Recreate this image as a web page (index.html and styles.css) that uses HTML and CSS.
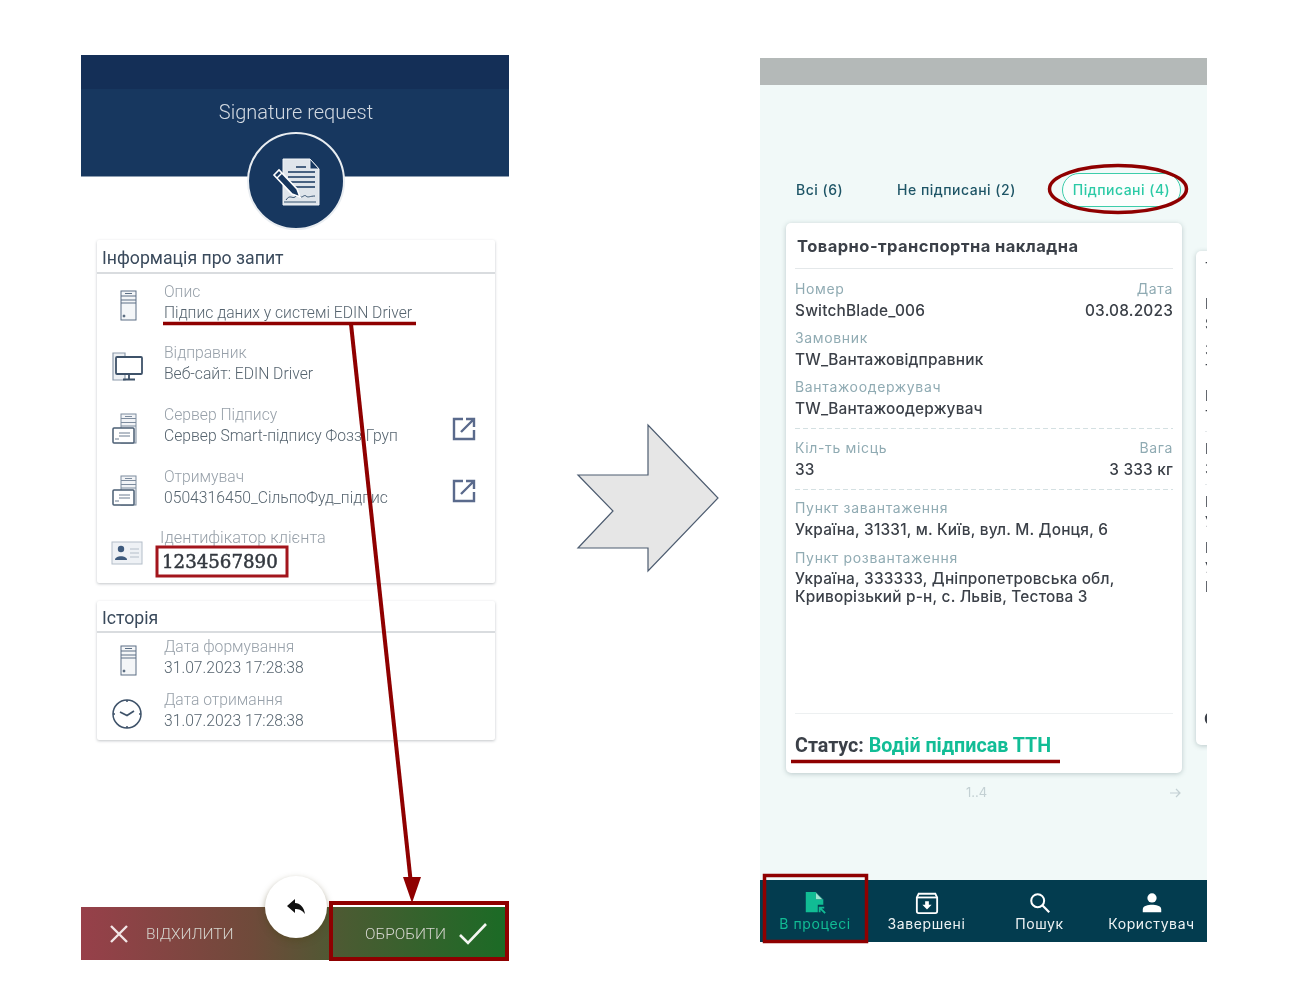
FILE: index.html
```html
<!DOCTYPE html>
<html lang="en">
<head>
    <meta charset="UTF-8">
    <title>Signature flow</title>
    <link rel="stylesheet" href="styles.css">
</head>
<body>
<div class="canvas">

    <!-- left phone -->
    <div class="phone-left">
        <div class="status-bar"></div>
        <div class="sig-header">Signature request</div>
        <div class="sig-badge">
            <svg width="60" height="60" viewBox="0 0 60 60">
                <path d="M19 8H46L55 18V54H19Z" fill="#dfe5eb" stroke="#f0f3f6" stroke-width="1"/>
                <path d="M46 8V18H55Z" fill="#17375f" stroke="#e8edf3"/>
                <path d="M24 21H51M24 26H51M24 31H51M24 36H51M32 16H42" stroke="#17375f" stroke-width="1.6"/>
                <path d="M22 49c4-6 6-1 9-3s3-4 5-1 4-2 6 0 4 0 9 0M20 51H52" stroke="#33506f" fill="none"/>
                <path d="M10 24L15 19L33 38L36 46L28 43Z" fill="#17375f" stroke="#fff" stroke-width="1.6"/>
                <path d="M13 27L18 22" stroke="#fff" stroke-width="1.4"/>
            </svg>
        </div>

        <section class="info-card first">
            <h2>Інформація про запит</h2>
            <div class="info-row">
                <svg class="row-icon" viewBox="0 0 32 32"><use href="#i-tower"/></svg>
                <div class="row-text"><span>Опис</span><p>Підпис даних у системі EDIN Driver</p></div>
            </div>
            <div class="info-row">
                <svg class="row-icon" viewBox="0 0 32 32"><use href="#i-desktop"/></svg>
                <div class="row-text"><span>Відправник</span><p>Веб-сайт: EDIN Driver</p></div>
            </div>
            <div class="info-row">
                <svg class="row-icon" viewBox="0 0 32 32"><use href="#i-server"/></svg>
                <div class="row-text"><span>Сервер Підпису</span><p>Сервер Smart-підпису Фозз Груп</p></div>
                <svg class="ext-icon" viewBox="0 0 24 24"><use href="#i-ext"/></svg>
            </div>
            <div class="info-row">
                <svg class="row-icon" viewBox="0 0 32 32"><use href="#i-server"/></svg>
                <div class="row-text"><span>Отримувач</span><p>0504316450_СільпоФуд_підпис</p></div>
                <svg class="ext-icon" viewBox="0 0 24 24"><use href="#i-ext"/></svg>
            </div>
            <div class="info-row client">
                <svg class="row-icon" viewBox="0 0 32 32"><use href="#i-card"/></svg>
                <div class="row-text"><span>Ідентифікатор клієнта</span><p class="client-id">1234567890</p></div>
            </div>
        </section>

        <section class="info-card second">
            <h2>Історія</h2>
            <div class="info-row short">
                <svg class="row-icon" viewBox="0 0 32 32"><use href="#i-tower"/></svg>
                <div class="row-text"><span>Дата формування</span><p>31.07.2023 17:28:38</p></div>
            </div>
            <div class="info-row short">
                <svg class="row-icon" viewBox="0 0 32 32"><use href="#i-clock"/></svg>
                <div class="row-text"><span>Дата отримання</span><p>31.07.2023 17:28:38</p></div>
            </div>
        </section>

        <div class="action-bar">
            <div class="action reject">
                <svg width="20" height="20" viewBox="0 0 20 20"><path d="M2 2L18 18M18 2L2 18" stroke="#f2e6e6" stroke-width="2.4"/></svg>
                <span>ВІДХИЛИТИ</span>
            </div>
            <div class="action process">
                <span>ОБРОБИТИ</span>
                <svg width="30" height="24" viewBox="0 0 30 24"><path d="M2 13L10 21L28 2" fill="none" stroke="#f4f6f2" stroke-width="2.6"/></svg>
            </div>
            <div class="back-btn">
                <svg width="20" height="18" viewBox="0 0 20 18"><path d="M1 8L9 1V5C14 5 18 9 19 16C16 12 13 11 9 11V15Z" fill="#111"/></svg>
            </div>
        </div>
    </div>

    <!-- arrow between phones -->
    <svg class="big-arrow" width="144" height="150" viewBox="0 0 144 150">
        <path d="M73 2V52H3L38 88L3 125H73V148L143 75Z" fill="#e6e6e6" stroke="#4d5c70" stroke-width="1.2"/>
    </svg>

    <!-- right phone -->
    <div class="phone-right">
        <div class="gray-bar"></div>
        <div class="tabs">
            <span class="tab tab-all">Всі (6)</span>
            <span class="tab tab-open">Не підписані (2)</span>
            <span class="tab tab-active">Підписані (4)</span>
        </div>
        <div class="cards">
            <article class="doc-card">
                <h3>Товарно-транспортна накладна</h3>
                <div class="doc-body">
                    <div class="pair"><div><label>Номер</label><b>SwitchBlade_006</b></div><div class="right"><label>Дата</label><b>03.08.2023</b></div></div>
                    <div class="field"><label>Замовник</label><b>TW_Вантажовідправник</b></div>
                    <div class="field"><label>Вантажоодержувач</label><b>TW_Вантажоодержувач</b></div>
                    <div class="pair dashed"><div><label>Кіл-ть місць</label><b>33</b></div><div class="right"><label>Вага</label><b>3 333 кг</b></div></div>
                    <div class="field dashed-top"><label>Пункт завантаження</label><b>Україна, 31331, м. Київ, вул. М. Донця, 6</b></div>
                    <div class="field last"><label>Пункт розвантаження</label><b class="tight">Україна, 333333, Дніпропетровська обл, Криворізький р-н, с. Львів, Тестова 3</b></div>
                </div>
                <div class="doc-status">Статус: <em>Водій підписав ТТН</em></div>
            </article>
            <article class="doc-card peek">
                <div class="peek-group top">Т</div>
                <div class="peek-group">Номер<br>SwitchBlade_006</div>
                <div class="peek-group">Замовник<br>TW_Вантажовідправник</div>
                <div class="peek-group">Вантажоодержувач<br>TW_Вантажоодержувач</div>
                <div class="peek-group ruled">Кіл-ть місць<br>33</div>
                <div class="peek-group ruled">Пункт завантаження<br>Україна</div>
                <div class="peek-group">Пункт розвантаження<br>Україна<br>Криворізький</div>
                <div class="peek-status">Статус</div>
            </article>
        </div>
        <div class="pager"><span>1..4</span>
            <svg width="12" height="12" viewBox="0 0 12 12"><path d="M1 6H11M7 2L11 6L7 10" fill="none" stroke="#c3d0d3" stroke-width="1.2"/></svg>
        </div>
        <nav class="tabbar">
            <div class="nav-item active">
                <svg width="26" height="26" viewBox="0 0 26 26"><path d="M3 1H14L22 9V15H16V23H3Z" fill="#11bc94"/><path d="M14 1V9H22Z" fill="#033c4f"/><path d="M14 2L21 9H14Z" fill="#9fe5d2"/><path d="M24 24L18 18M18 23V18H23" fill="none" stroke="#11bc94" stroke-width="2"/></svg>
                <span>В процесі</span>
            </div>
            <div class="nav-item">
                <svg width="26" height="26" viewBox="0 0 26 26"><path d="M4 3H22L24 7V22A2 2 0 0 1 22 24H4A2 2 0 0 1 2 22V7Z" fill="none" stroke="#fff" stroke-width="2"/><path d="M2 7H24" stroke="#fff" stroke-width="2"/><path d="M11 11H15V15H18L13 20L8 15H11Z" fill="#fff"/></svg>
                <span>Завершені</span>
            </div>
            <div class="nav-item">
                <svg width="26" height="26" viewBox="0 0 26 26"><circle cx="10.500" cy="10.500" r="7" fill="none" stroke="#fff" stroke-width="2.200"/><path d="M15.500 15.500L23 23" stroke="#fff" stroke-width="2.400"/></svg>
                <span>Пошук</span>
            </div>
            <div class="nav-item">
                <svg width="26" height="26" viewBox="0 0 26 26"><circle cx="13" cy="7.500" r="5" fill="#fff"/><path d="M3 23V20C3 16 9 15 13 15S23 16 23 20V23Z" fill="#fff"/></svg>
                <span>Користувач</span>
            </div>
        </nav>
    </div>

    <!-- red annotations on top of both phones -->
    <svg class="marks" width="1300" height="1000" viewBox="0 0 1300 1000">
        <path d="M163 323.500H416" stroke="#8f0000" stroke-width="3.500"/>
        <path d="M351 324L411 884" stroke="#8f0000" stroke-width="4"/>
        <path d="M403 877H421L412 903Z" fill="#8f0000"/>
        <rect x="157" y="547" width="130" height="29" fill="none" stroke="#a3151c" stroke-width="3"/>
        <rect x="331" y="903" width="176" height="56" fill="none" stroke="#8f0000" stroke-width="4"/>
        <ellipse cx="1118" cy="189" rx="68.500" ry="23.500" fill="none" stroke="#8f0000" stroke-width="3.500"/>
        <path d="M791 761.500H1060" stroke="#8f0000" stroke-width="3.500"/>
        <rect x="764.500" y="875.500" width="102" height="66" fill="none" stroke="#8f0000" stroke-width="3.500"/>
    </svg>
</div>

<svg width="0" height="0" class="defs">
    <defs>
        <g id="i-tower" fill="none" stroke="#5c6f85" stroke-width="1">
            <rect x="10" y="1" width="15" height="29" fill="#f4f6f8"/>
            <path d="M10 6H25M10 10H25M10 13H25M14 3.500H21"/>
            <circle cx="13" cy="26" r="1" fill="#33465c"/>
        </g>
        <g id="i-desktop" fill="none" stroke="#5c6f85" stroke-width="1.200">
            <path d="M2 2H14V29H2Z" fill="#eef1f4" stroke="#8d9bab"/>
            <rect x="5" y="6" width="26" height="17" rx="1" fill="#fff" stroke="#3e5269" stroke-width="1.800"/>
            <path d="M18 23V28M12 28.500H24" stroke="#3e5269" stroke-width="1.800"/>
        </g>
        <g id="i-server" fill="none" stroke="#7d8c9e" stroke-width="1">
            <rect x="10" y="1" width="15" height="29" fill="#f1f3f6"/>
            <path d="M10 5.500H25M10 9.500H25M10 13H25M14 3.500H21"/>
            <rect x="2" y="15" width="21" height="15" rx="1" fill="#fff" stroke="#4a5d73" stroke-width="1.500"/>
            <path d="M8 20H19M8 23H19M4 26H8" stroke="#6d7d90"/>
        </g>
        <g id="i-card" fill="none" stroke="#5c6f85">
            <rect x="1" y="5" width="30" height="22" fill="#eef1f5" stroke="#b4bec9"/>
            <circle cx="10" cy="12" r="3.200" fill="#3e5a7d" stroke="none"/>
            <path d="M4 23C4 18 16 18 16 23Z" fill="#3e5a7d" stroke="none"/>
            <path d="M19 12H28M19 16H28M19 20H28" stroke="#b4bec9"/>
        </g>
        <g id="i-clock" fill="none" stroke="#3e5269" stroke-width="1.500">
            <circle cx="16" cy="16" r="14"/>
            <path d="M9 14L16 17.500L23 13" stroke-width="1.700"/>
            <path d="M16 2V4M16 28V30M2 16H4M28 16H30"/>
        </g>
        <g id="i-ext" fill="none" stroke="#5a6a8c" stroke-width="2.400">
            <path d="M11 2H2V22H22V13"/>
            <path d="M9 15L22 2M14 2H22V10"/>
        </g>
    </defs>
</svg>
</body>
</html>
```
FILE: styles.css
```css
* {
    box-sizing: border-box;
}
body {
    margin: 0;
    background: #fff;
    font-family: Roboto, sans-serif;
}
.canvas {
    position: relative;
    width: 1300px;
    height: 1000px;
    overflow: hidden;
}
.defs {
    position: absolute;
}

/* left phone */
.phone-left {
    position: absolute;
    left: 81px;
    top: 55px;
    width: 428px;
    height: 905px;
    background: #fff;
    filter: blur(0.3px);
}
.status-bar {
    height: 34px;
    background: #142f57;
}
.sig-header {
    height: 88px;
    padding-top: 9px;
    padding-left: 2px;
    background: #17375f;
    border-bottom: 1px solid #8d9db0;
    color: #d3dae2;
    font-size: 20px;
    font-weight: 300;
    text-align: center;
    line-height: 28px;
}
.sig-badge {
    position: absolute;
    left: 166px;
    top: 77px;
    width: 98px;
    height: 98px;
    display: flex;
    align-items: center;
    justify-content: center;
    padding-right: 4px;
    border-radius: 50%;
    background: #17375f;
    border: 2px solid #e9edf1;
}
.info-card {
    margin: 0 14px 0 16px;
    background: #fff;
    box-shadow: 0 1px 3px rgba(40, 50, 60, 0.28);
    border-radius: 2px;
}
.info-card.first {
    margin-top: 63px;
    height: 343px;
}
.info-card.second {
    margin-top: 18px;
    height: 139px;
}
.info-card h2 {
    margin: 0;
    height: 34px;
    padding: 6px 5px 0;
    border-bottom: 2px solid #d9dcdf;
    color: #3a4a5c;
    font-size: 17.700px;
    font-weight: 400;
    line-height: 24px;
}
.info-card.second h2 {
    height: 32px;
    padding-top: 5px;
}
.info-row {
    display: flex;
    align-items: center;
    height: 62px;
    padding: 6px 18px 14px 14px;
}
.info-row:first-of-type {
    padding-top: 7px;
    padding-bottom: 13px;
}
.info-row.short {
    height: 53px;
    padding: 2px 18px 9px 14px;
}
.second .info-row.short:first-of-type {
    margin-top: 1px;
}
.row-icon {
    width: 32px;
    height: 32px;
    flex: none;
    margin-top: 8px;
}
.row-text {
    flex: 1;
    margin-left: 21px;
}
.row-text span {
    display: block;
    color: #97a0a9;
    font-size: 15.700px;
    font-weight: 300;
    line-height: 21px;
}
.row-text p {
    margin: 0;
    color: #56646f;
    font-size: 15.700px;
    font-weight: 300;
    line-height: 21px;
    white-space: nowrap;
}
.ext-icon {
    width: 24px;
    height: 24px;
    flex: none;
    margin-top: 8px;
    margin-right: 1px;
}
.client .row-text {
    margin-left: 17px;
}
.client .row-text span {
    margin-top: 2px;
    font-size: 16.300px;
}
.row-text .client-id {
    margin: 2px 0 0 2px;
    color: #33383f;
    font-family: "DejaVu Serif", serif;
    font-size: 18.200px;
    font-weight: 400;
    line-height: 24px;
    -webkit-text-stroke: 0.5px #33383f;
}
.action-bar {
    position: absolute;
    left: 0;
    bottom: 0;
    width: 428px;
    height: 53px;
    display: flex;
    justify-content: space-between;
    align-items: center;
    padding: 0 21px 0 28px;
    background: linear-gradient(90deg, #97404a 0%, #6f4a3a 40%, #4a5b32 62%, #1a6b25 100%);
}
.action {
    display: flex;
    align-items: center;
    gap: 17px;
    padding-top: 1px;
    color: #d5d5cf;
    font-size: 15.500px;
    font-weight: 300;
}
.process {
    gap: 12px;
}
.back-btn {
    position: absolute;
    left: 184px;
    top: -31px;
    width: 62px;
    height: 62px;
    display: flex;
    align-items: center;
    justify-content: center;
    border-radius: 50%;
    background: #fff;
    box-shadow: 0 3px 6px rgba(80, 70, 30, 0.5);
}

.big-arrow {
    position: absolute;
    left: 575px;
    top: 423px;
}

/* right phone */
.phone-right {
    position: absolute;
    left: 760px;
    top: 58px;
    width: 447px;
    height: 884px;
    overflow: hidden;
    background: #f1f9f8;
    font-family: Inter, sans-serif;
    filter: blur(0.3px);
}
.gray-bar {
    height: 27px;
    background: #b4b9b8;
}
.tabs {
    position: relative;
    height: 138px;
    color: #1e5566;
    font-size: 14px;
    font-weight: 500;
    letter-spacing: 0.5px;
}
.tab {
    position: absolute;
    top: 95px;
    line-height: 20px;
}
.tab-all {
    left: 36px;
}
.tab-open {
    left: 137px;
}
.tab-active {
    left: 302px;
    top: 88px;
    width: 119px;
    height: 34px;
    border: 1.500px solid #3ccdaa;
    border-radius: 17px;
    background: #fbfefd;
    color: #2bcaa6;
    line-height: 31px;
    text-align: center;
}
.cards {
    display: flex;
    gap: 14px;
    align-items: center;
    height: 550px;
    margin-left: 26px;
}
.doc-card {
    position: relative;
    flex: none;
    display: flex;
    flex-direction: column;
    width: 396px;
    height: 550px;
    padding: 0 9px;
    background: #fff;
    border-radius: 5px;
    box-shadow: 0 1px 5px rgba(60, 90, 95, 0.3);
}
.doc-card h3 {
    margin: 0;
    height: 46px;
    padding: 12px 2px 0;
    border-bottom: 1.500px solid #e4e8ea;
    color: #3b4048;
    font-size: 16.500px;
    font-weight: 700;
    line-height: 22px;
    letter-spacing: 0.45px;
}
.doc-body {
    flex: 1;
    padding-top: 10px;
}
.pair {
    display: flex;
    justify-content: space-between;
}
.right {
    text-align: right;
}
label {
    display: block;
    color: #90abb3;
    font-size: 14px;
    line-height: 20px;
    letter-spacing: 0.65px;
}
b {
    display: block;
    margin-top: 2px;
    color: #3b4048;
    font-size: 15.400px;
    font-weight: 500;
    line-height: 20px;
    letter-spacing: 0.2px;
}
b.tight {
    line-height: 18px;
}
.field {
    margin-top: 7px;
}
.field.last {
    margin-top: 8px;
}
.pair.dashed, .field.dashed-top {
    margin-top: 9px;
    padding-top: 10px;
    background: linear-gradient(90deg, #d4e0e2 5px, transparent 5px) top left / 8px 1px repeat-x;
}
.field.dashed-top {
    padding-top: 9px;
}
.doc-status {
    height: 60px;
    padding-top: 20px;
    border-top: 1px solid #edf0f1;
    color: #3b4048;
    font-family: Roboto, sans-serif;
    font-size: 19.700px;
    font-weight: 700;
    line-height: 24px;
}
.doc-status em {
    color: #12bd96;
    font-style: normal;
}
.doc-card.peek {
    height: 494px;
    color: #3b4048;
    font-size: 14px;
    line-height: 19.500px;
    white-space: nowrap;
}
.peek-group {
    margin-top: 6px;
    padding-top: 1px;
}
.peek-group.top {
    margin-top: 6px;
    height: 30px;
}
.peek-group.ruled {
    margin-top: 6px;
    padding-top: 7px;
    border-top: 1px solid #e4e8ea;
}
.peek-status {
    position: absolute;
    left: 8px;
    top: 458px;
    font-size: 18px;
    font-weight: 700;
}
.pager {
    position: relative;
    height: 39px;
    padding-top: 11px;
    text-align: center;
    color: #c3d0d3;
    font-size: 13px;
}
.pager span {
    position: relative;
    left: -7px;
}
.pager svg {
    position: absolute;
    left: 409px;
    top: 14px;
}
.tabbar {
    position: absolute;
    left: 0;
    bottom: 0;
    width: 447px;
    height: 62px;
    display: grid;
    grid-template-columns: 110px 113px 113px 111px;
    background: #033c4f;
    color: #eef3f4;
    font-size: 14px;
    letter-spacing: 0.6px;
}
.nav-item {
    display: flex;
    flex-direction: column;
    align-items: center;
    padding-top: 11px;
    line-height: 20px;
}
.nav-item svg {
    height: 24px;
    margin-bottom: -1px;
}
.nav-item.active {
    color: #11bc94;
}
.marks {
    position: absolute;
    left: 0;
    top: 0;
    pointer-events: none;
}
```
